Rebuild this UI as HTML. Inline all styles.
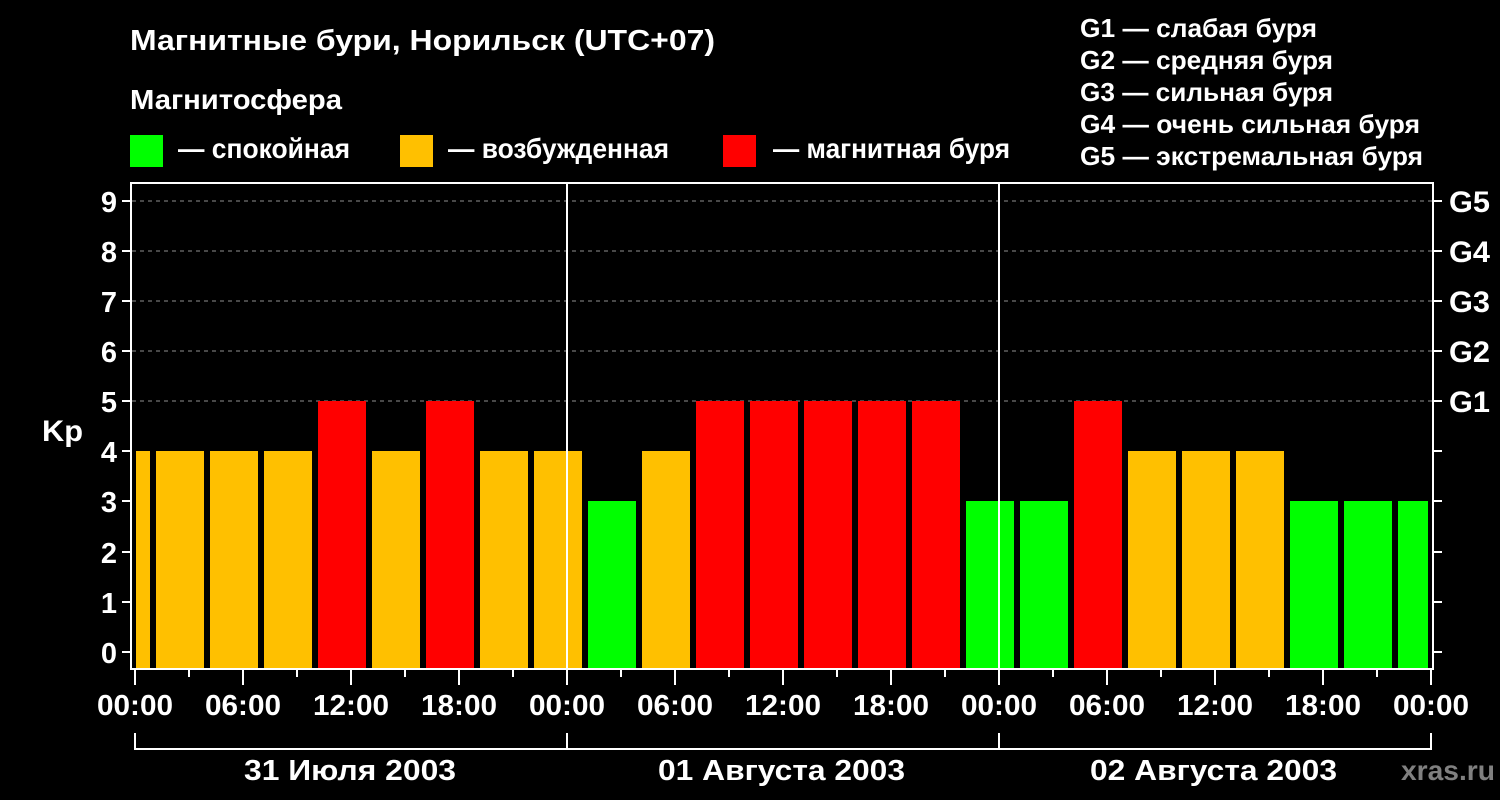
<!DOCTYPE html>
<html><head><meta charset="utf-8"><style>html,body{margin:0;padding:0;background:#000;width:1500px;height:800px;overflow:hidden}svg{display:block}text{font-family:"Liberation Sans",Arial,sans-serif;font-weight:bold;fill:#fff}</style></head>
<body>
<svg width="1500" height="800" viewBox="0 0 1500 800" xmlns="http://www.w3.org/2000/svg">
<rect width="1500" height="800" fill="#000"/>
<text x="130" y="50" font-size="29" textLength="585" lengthAdjust="spacingAndGlyphs">Магнитные бури, Норильск (UTC+07)</text>
<text x="130" y="109" font-size="28" textLength="212" lengthAdjust="spacingAndGlyphs">Магнитосфера</text>
<rect x="130" y="135" width="33" height="32" fill="#00ff00"/>
<text x="178" y="158" font-size="28" textLength="172" lengthAdjust="spacingAndGlyphs">— спокойная</text>
<rect x="400" y="135" width="33" height="32" fill="#ffc000"/>
<text x="448" y="158" font-size="28" textLength="221" lengthAdjust="spacingAndGlyphs">— возбужденная</text>
<rect x="723" y="135" width="33" height="32" fill="#ff0000"/>
<text x="773" y="158" font-size="28" textLength="237" lengthAdjust="spacingAndGlyphs">— магнитная буря</text>
<g font-size="26">
<text x="1080" y="37" textLength="237" lengthAdjust="spacingAndGlyphs">G1 — слабая буря</text>
<text x="1080" y="69" textLength="253" lengthAdjust="spacingAndGlyphs">G2 — средняя буря</text>
<text x="1080" y="101" textLength="253" lengthAdjust="spacingAndGlyphs">G3 — сильная буря</text>
<text x="1080" y="133" textLength="340" lengthAdjust="spacingAndGlyphs">G4 — очень сильная буря</text>
<text x="1080" y="165" textLength="343" lengthAdjust="spacingAndGlyphs">G5 — экстремальная буря</text>
</g>
<g stroke="#909090" stroke-width="1" stroke-dasharray="4,4">
<line x1="132" y1="201" x2="1432" y2="201"/>
<line x1="132" y1="251" x2="1432" y2="251"/>
<line x1="132" y1="301" x2="1432" y2="301"/>
<line x1="132" y1="351" x2="1432" y2="351"/>
<line x1="132" y1="401" x2="1432" y2="401"/>
</g>
<g>
<rect x="136" y="451" width="14" height="217" fill="#ffc000"/>
<rect x="156" y="451" width="48" height="217" fill="#ffc000"/>
<rect x="210" y="451" width="48" height="217" fill="#ffc000"/>
<rect x="264" y="451" width="48" height="217" fill="#ffc000"/>
<rect x="318" y="401" width="48" height="267" fill="#ff0000"/>
<rect x="372" y="451" width="48" height="217" fill="#ffc000"/>
<rect x="426" y="401" width="48" height="267" fill="#ff0000"/>
<rect x="480" y="451" width="48" height="217" fill="#ffc000"/>
<rect x="534" y="451" width="48" height="217" fill="#ffc000"/>
<rect x="588" y="501" width="48" height="167" fill="#00ff00"/>
<rect x="642" y="451" width="48" height="217" fill="#ffc000"/>
<rect x="696" y="401" width="48" height="267" fill="#ff0000"/>
<rect x="750" y="401" width="48" height="267" fill="#ff0000"/>
<rect x="804" y="401" width="48" height="267" fill="#ff0000"/>
<rect x="858" y="401" width="48" height="267" fill="#ff0000"/>
<rect x="912" y="401" width="48" height="267" fill="#ff0000"/>
<rect x="966" y="501" width="48" height="167" fill="#00ff00"/>
<rect x="1020" y="501" width="48" height="167" fill="#00ff00"/>
<rect x="1074" y="401" width="48" height="267" fill="#ff0000"/>
<rect x="1128" y="451" width="48" height="217" fill="#ffc000"/>
<rect x="1182" y="451" width="48" height="217" fill="#ffc000"/>
<rect x="1236" y="451" width="48" height="217" fill="#ffc000"/>
<rect x="1290" y="501" width="48" height="167" fill="#00ff00"/>
<rect x="1344" y="501" width="48" height="167" fill="#00ff00"/>
<rect x="1398" y="501" width="30" height="167" fill="#00ff00"/>
</g>
<g stroke="#fff" stroke-width="2" fill="none">
<line x1="130" y1="183" x2="1434" y2="183"/>
<line x1="131" y1="183" x2="131" y2="668"/>
<line x1="1433" y1="183" x2="1433" y2="668"/>
<line x1="130" y1="669" x2="1434" y2="669"/>
<line x1="567" y1="183" x2="567" y2="668"/>
<line x1="999" y1="183" x2="999" y2="668"/>
</g>
<g stroke="#fff" stroke-width="2">
<line x1="122" y1="201" x2="131" y2="201"/><line x1="122" y1="251" x2="131" y2="251"/><line x1="122" y1="301" x2="131" y2="301"/><line x1="122" y1="351" x2="131" y2="351"/><line x1="122" y1="401" x2="131" y2="401"/><line x1="122" y1="451" x2="131" y2="451"/><line x1="122" y1="501" x2="131" y2="501"/><line x1="122" y1="552" x2="131" y2="552"/><line x1="122" y1="602" x2="131" y2="602"/><line x1="122" y1="652" x2="131" y2="652"/>
<line x1="1433" y1="201" x2="1442" y2="201"/><line x1="1433" y1="251" x2="1442" y2="251"/><line x1="1433" y1="301" x2="1442" y2="301"/><line x1="1433" y1="351" x2="1442" y2="351"/><line x1="1433" y1="401" x2="1442" y2="401"/><line x1="1433" y1="451" x2="1442" y2="451"/><line x1="1433" y1="501" x2="1442" y2="501"/><line x1="1433" y1="552" x2="1442" y2="552"/><line x1="1433" y1="602" x2="1442" y2="602"/><line x1="1433" y1="652" x2="1442" y2="652"/>
</g>
<g stroke="#fff" stroke-width="2">
<line x1="135" y1="670" x2="135" y2="685"/><line x1="189" y1="670" x2="189" y2="677"/><line x1="243" y1="670" x2="243" y2="685"/><line x1="297" y1="670" x2="297" y2="677"/><line x1="351" y1="670" x2="351" y2="685"/><line x1="405" y1="670" x2="405" y2="677"/><line x1="459" y1="670" x2="459" y2="685"/><line x1="513" y1="670" x2="513" y2="677"/>
<line x1="567" y1="670" x2="567" y2="685"/><line x1="621" y1="670" x2="621" y2="677"/><line x1="675" y1="670" x2="675" y2="685"/><line x1="729" y1="670" x2="729" y2="677"/><line x1="783" y1="670" x2="783" y2="685"/><line x1="837" y1="670" x2="837" y2="677"/><line x1="891" y1="670" x2="891" y2="685"/><line x1="945" y1="670" x2="945" y2="677"/>
<line x1="999" y1="670" x2="999" y2="685"/><line x1="1053" y1="670" x2="1053" y2="677"/><line x1="1107" y1="670" x2="1107" y2="685"/><line x1="1161" y1="670" x2="1161" y2="677"/><line x1="1215" y1="670" x2="1215" y2="685"/><line x1="1269" y1="670" x2="1269" y2="677"/><line x1="1323" y1="670" x2="1323" y2="685"/><line x1="1377" y1="670" x2="1377" y2="677"/><line x1="1431" y1="670" x2="1431" y2="685"/>
<polyline points="135,733 135,749 1431,749 1431,733" fill="none"/>
<line x1="567" y1="733" x2="567" y2="749"/><line x1="999" y1="733" x2="999" y2="749"/>
</g>
<g font-size="29" text-anchor="end">
<text x="117" y="212">9</text><text x="117" y="262">8</text><text x="117" y="312">7</text><text x="117" y="362">6</text><text x="117" y="412">5</text><text x="117" y="462">4</text><text x="117" y="512">3</text><text x="117" y="563">2</text><text x="117" y="613">1</text><text x="117" y="663">0</text>
</g>
<text x="42" y="441" font-size="30" textLength="41" lengthAdjust="spacingAndGlyphs">Kp</text>
<g font-size="30">
<text x="1449" y="212" textLength="41" lengthAdjust="spacingAndGlyphs">G5</text><text x="1449" y="262" textLength="41" lengthAdjust="spacingAndGlyphs">G4</text><text x="1449" y="312" textLength="41" lengthAdjust="spacingAndGlyphs">G3</text><text x="1449" y="362" textLength="41" lengthAdjust="spacingAndGlyphs">G2</text><text x="1449" y="412" textLength="41" lengthAdjust="spacingAndGlyphs">G1</text>
</g>
<g font-size="29">
<text x="97" y="715" textLength="76" lengthAdjust="spacingAndGlyphs">00:00</text><text x="205" y="715" textLength="76" lengthAdjust="spacingAndGlyphs">06:00</text><text x="313" y="715" textLength="76" lengthAdjust="spacingAndGlyphs">12:00</text><text x="421" y="715" textLength="76" lengthAdjust="spacingAndGlyphs">18:00</text>
<text x="529" y="715" textLength="76" lengthAdjust="spacingAndGlyphs">00:00</text><text x="637" y="715" textLength="76" lengthAdjust="spacingAndGlyphs">06:00</text><text x="745" y="715" textLength="76" lengthAdjust="spacingAndGlyphs">12:00</text><text x="853" y="715" textLength="76" lengthAdjust="spacingAndGlyphs">18:00</text>
<text x="961" y="715" textLength="76" lengthAdjust="spacingAndGlyphs">00:00</text><text x="1069" y="715" textLength="76" lengthAdjust="spacingAndGlyphs">06:00</text><text x="1177" y="715" textLength="76" lengthAdjust="spacingAndGlyphs">12:00</text><text x="1285" y="715" textLength="76" lengthAdjust="spacingAndGlyphs">18:00</text>
<text x="1393" y="715" textLength="76" lengthAdjust="spacingAndGlyphs">00:00</text>
<text x="244" y="780" textLength="212" lengthAdjust="spacingAndGlyphs">31 Июля 2003</text>
<text x="658" y="780" textLength="247" lengthAdjust="spacingAndGlyphs">01 Августа 2003</text>
<text x="1090" y="780" textLength="247" lengthAdjust="spacingAndGlyphs">02 Августа 2003</text>
</g>
<text x="1401" y="780" font-size="28" textLength="94" lengthAdjust="spacingAndGlyphs" style="fill:#808080">xras.ru</text>
</svg>
</body></html>
